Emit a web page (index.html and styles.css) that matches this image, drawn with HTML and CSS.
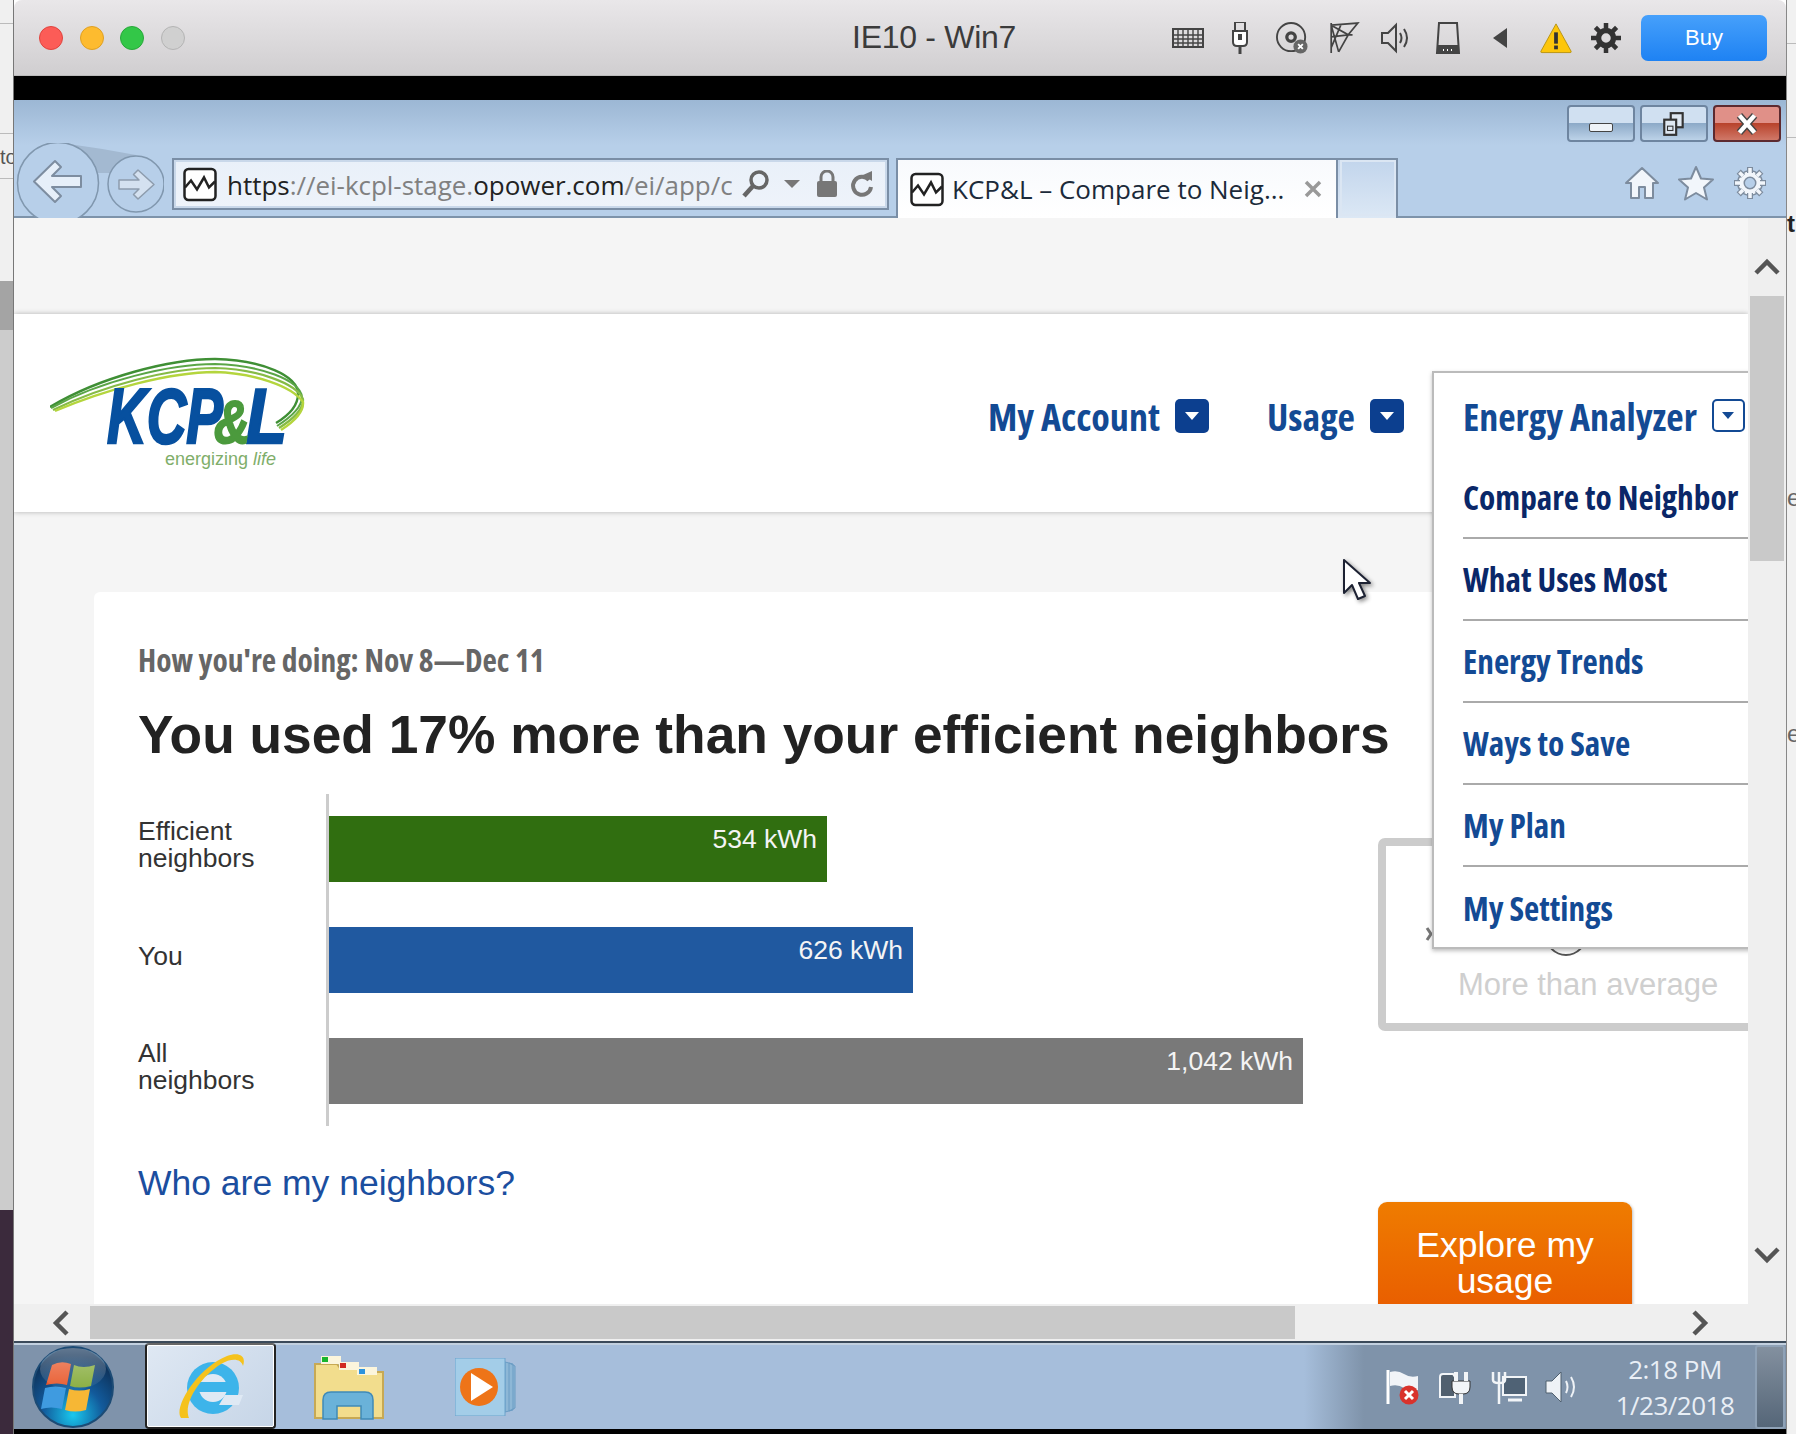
FILE: index.html
```html
<!DOCTYPE html>
<html lang="en">
<head>
<meta charset="utf-8">
<title>IE10 - Win7</title>
<link rel="stylesheet" href="styles.css">
</head>
<body>
<div class="screen">
  <div class="bg-left"><span class="bg-frag">to</span><i class="bg-dark"></i><i class="bg-purple"></i></div>

  <div class="window">
    <header class="titlebar">
      <div class="lights"><i class="light red"></i><i class="light orange"></i><i class="light green"></i><i class="light off"></i></div>
      <div class="vm-title">IE10 - Win7</div>
      <div class="vm-tools">
        <span class="tool"><svg class="ic" viewBox="0 0 32 20"><rect x="1" y="1" width="30" height="18" fill="none" stroke="#444" stroke-width="2"/><path d="M1 7h30M1 11h30M1 15h30M6 1v18M11 1v18M16 1v18M21 1v18M26 1v18" stroke="#444" stroke-width="1.4"/></svg></span>
        <span class="tool"><svg class="ic" viewBox="0 0 32 32"><rect x="11" y="0" width="10" height="9" fill="none" stroke="#444" stroke-width="2"/><path d="M9 9h14v11q0 4-4 4h-6q-4 0-4-4z" fill="#fff" stroke="#444" stroke-width="2"/><path d="M16 24v8" stroke="#444" stroke-width="3"/><path d="M14 12h4v6h-4z" fill="#444"/></svg></span>
        <span class="tool"><svg class="ic" viewBox="0 0 34 34"><circle cx="16" cy="16" r="15" fill="none" stroke="#444" stroke-width="2"/><circle cx="16" cy="16" r="4.5" fill="none" stroke="#444" stroke-width="3.5"/><circle cx="26" cy="26" r="7.5" fill="#666"/><path d="M23.5 23.500l5 5M28.500 23.500l-5 5" stroke="#fff" stroke-width="2"/></svg></span>
        <span class="tool"><svg class="ic" viewBox="0 0 30 30"><path d="M3 1v28M3 3l25-2-9 11-9 16M3 3l16 9 4 0M3 14l16-2M3 3l7 25M12 3l-9 21" fill="none" stroke="#444" stroke-width="1.6"/></svg></span>
        <span class="tool"><svg class="ic" viewBox="0 0 32 30"><path d="M2 10h6l8-8v26l-8-8H2z" fill="none" stroke="#444" stroke-width="2"/><path d="M20 10q3 5 0 10M24 6q6 9 0 18" fill="none" stroke="#444" stroke-width="2"/></svg></span>
        <span class="tool"><svg class="ic" viewBox="0 0 26 32"><path d="M4 1h18l2 30H2z" fill="none" stroke="#444" stroke-width="2"/><rect x="2" y="23" width="22" height="8" fill="#444"/><path d="M8 28h1M12 28h1M16 28h1" stroke="#fff" stroke-width="2"/></svg></span>
        <span class="tool"><svg class="ic-sm" viewBox="0 0 16 20"><path d="M15 0v20L1 10z" fill="#444"/></svg></span>
        <span class="tool tool-shift"><svg class="ic" viewBox="0 0 34 32"><path d="M17 1L33 30q.5 1.500-1 1.500H2q-1.500 0-1-1.500z" fill="#fdc60b" stroke="#b8920f" stroke-width="1"/><rect x="15" y="10" width="4" height="12" fill="#333"/><rect x="15" y="24" width="4" height="4" fill="#333"/></svg></span>
        <span class="tool tool-back"><svg class="ic" viewBox="0 0 32 32"><circle cx="16" cy="16" r="7.500" fill="none" stroke="#333" stroke-width="5.500"/><path d="M16 1v6M16 25v6M1 16h6M25 16h6M5.400 5.400l4.200 4.200M22.400 22.400l4.200 4.200M26.600 5.400l-4.200 4.200M9.600 22.400l-4.200 4.200" stroke="#333" stroke-width="4.500"/></svg></span>
        <button class="buy" type="button">Buy</button>
      </div>
    </header>
    <div class="blackbar"></div>

    <section class="chrome">
      <div class="winctl">
        <span class="wbtn"><i class="wmin"></i></span>
        <span class="wbtn"><svg class="wico" viewBox="0 0 24 24"><rect x="9" y="2" width="11" height="13" fill="#dfe8f2" stroke="#333" stroke-width="2"/><rect x="3" y="8" width="11" height="14" fill="#dfe8f2" stroke="#333" stroke-width="2"/><rect x="6" y="14" width="5" height="4" fill="none" stroke="#333"/></svg></span>
        <span class="wbtn wclose"><svg class="wico" viewBox="0 0 24 24"><path d="M5 4l14 16M19 4L5 20" stroke="#444" stroke-width="6.500"/><path d="M5 4l14 16M19 4L5 20" stroke="#fff" stroke-width="4"/></svg></span>
      </div>
      <div class="navrow">
        <svg class="backfwd" viewBox="0 0 150 75">
          <path d="M48 0Q85 5 122 12L110 30L80 30z" fill="#a3b9d1"/>
          <circle cx="44" cy="40" r="40.500" fill="#b7cfe9" stroke="#8097ae" stroke-width="1.500"/>
          <circle cx="122" cy="41" r="28" fill="#b7cfe9" stroke="#8097ae" stroke-width="1.500"/>
          <path d="M41 18L20 38.500L41 59L47 53L38 44H67V33H38L47 24z" fill="#e6eff9" stroke="#7d8da0" stroke-width="2" stroke-linejoin="round"/>
          <path d="M124 27L140 41.500L124 56L119.500 51.500L125 46H105V37H125L119.500 31.500z" fill="#d4e1f0" stroke="#8d9cad" stroke-width="1.500" stroke-linejoin="round"/>
        </svg>
        <div class="address">
          <svg class="favicon" viewBox="0 0 34 34"><rect x="1.500" y="1.500" width="31" height="31" rx="4" fill="#fff" stroke="#222" stroke-width="2.500"/><path d="M2 20l6-7 6 9 7-12 5 10 6-6" fill="none" stroke="#222" stroke-width="2.500"/></svg>
          <div class="url"><span class="d">https</span>://ei-kcpl-stage.<span class="d">opower.com</span>/ei/app/c</div>
          <svg class="addr-ico search" viewBox="0 0 30 30"><circle cx="18" cy="11" r="8" fill="none" stroke="#666" stroke-width="3.500"/><path d="M12 17L3 27" stroke="#666" stroke-width="4.500"/></svg>
          <svg class="addr-ico caret" viewBox="0 0 16 8"><path d="M0 0h16L8 8z" fill="#777"/></svg>
          <svg class="addr-ico lock" viewBox="0 0 22 28"><path d="M5 12V7a6 6 0 0 1 12 0v5" fill="none" stroke="#777" stroke-width="3"/><rect x="1" y="11" width="20" height="16" rx="2" fill="#777"/></svg>
          <svg class="addr-ico refresh" viewBox="0 0 24 28"><path d="M19 10A9 9 0 1 0 21 17" fill="none" stroke="#777" stroke-width="4"/><path d="M13 5l9-4v10z" fill="#777"/></svg>
        </div>
        <div class="tab">
          <svg class="favicon" viewBox="0 0 34 34"><rect x="1.500" y="1.500" width="31" height="31" rx="4" fill="#fff" stroke="#222" stroke-width="2.500"/><path d="M2 20l6-7 6 9 7-12 5 10 6-6" fill="none" stroke="#222" stroke-width="2.500"/></svg>
          <span class="tab-title">KCP&amp;L – Compare to Neig...</span>
          <svg class="tab-x" viewBox="0 0 18 18"><path d="M2 2l14 14M16 2L2 16" stroke="#999" stroke-width="3.500"/></svg>
        </div>
        <div class="newtab"></div>
        <div class="ie-tools">
          <svg class="ie-ic" viewBox="0 0 36 34"><path d="M18 2L2 17h5v15h8V21h6v11h8V17h5z" fill="#f2f6fb" stroke="#7d8c9e" stroke-width="2" stroke-linejoin="round"/></svg>
          <svg class="ie-ic" viewBox="0 0 36 34"><path d="M18 1l5 11.500 12 1-9 8 3 12-11-6.500-11 6.500 3-12-9-8 12-1z" fill="#f2f6fb" stroke="#7d8c9e" stroke-width="2" stroke-linejoin="round"/></svg>
          <svg class="ie-ic" viewBox="0 0 36 36"><circle cx="18" cy="18" r="9" fill="none" stroke="#7d8c9e" stroke-width="8"/><circle cx="18" cy="18" r="9" fill="none" stroke="#f2f6fb" stroke-width="5"/><path d="M18 2v6M18 28v6M2 18h6M28 18h6M6.700 6.700l4.300 4.300M25 25l4.300 4.300M29.300 6.700L25 11M11 25l-4.300 4.300" stroke="#7d8c9e" stroke-width="6"/><path d="M18 3v5M18 28v5M3 18h5M28 18h5M7.400 7.400l3.600 3.600M25 25l3.600 3.600M28.600 7.400L25 11M11 25l-3.600 3.600" stroke="#f2f6fb" stroke-width="3.500"/></svg>
        </div>
      </div>
    </section>

    <div class="viewport">
      <main class="page">
        <div class="page-top"></div>
        <div class="site-header">
          <svg class="logo" viewBox="0 0 260 120">
            <g fill="none">
              <path d="M0 52C50 22 120 4 165 4C213 5 248 21 248 39C248 52 236 62 226 68" stroke="#3f8f35" stroke-width="2.400"/>
              <path d="M1 53C50 26 120 9 165 9C210 10 250 25 252 42C252 54 238 64 227 71" stroke="#5aa546" stroke-width="2"/>
              <path d="M3 55C52 31 120 13 165 13C206 14 246 28 253 44C254 56 240 66 229 73" stroke="#86bb46" stroke-width="2.200"/>
              <path d="M5 56C54 35 120 17 165 17C203 18 242 31 253 47C254 58 242 68 231 75" stroke="#b4d53d" stroke-width="2.400"/>
            </g>
            <text class="logo-main" x="57" y="88" textLength="116" lengthAdjust="spacingAndGlyphs">KCP</text>
            <text class="logo-main" x="196" y="88" textLength="41" lengthAdjust="spacingAndGlyphs">L</text>
            <text class="logo-amp" x="164" y="88" textLength="36" lengthAdjust="spacingAndGlyphs">&amp;</text>
            <text class="logo-sub" x="115" y="110">energizing <tspan class="logo-life">life</tspan></text>
          </svg>
          <nav class="nav">
            <a class="nav-item">My Account <i class="drop"></i></a>
            <a class="nav-item">Usage <i class="drop"></i></a>
          </nav>
        </div>

        <article class="card">
          <div class="card-main">
            <p class="period">How you're doing: Nov 8—Dec 11</p>
            <h1 class="headline">You used 17% more than your efficient neighbors</h1>
            <div class="chart">
              <div class="labels">
                <div class="lab">Efficient<br>neighbors</div>
                <div class="lab">You</div>
                <div class="lab">All<br>neighbors</div>
              </div>
              <div class="bars">
                <div class="bar bar-green" style="width:498px">534 kWh</div>
                <div class="bar bar-blue" style="width:584px">626 kWh</div>
                <div class="bar bar-gray" style="width:974px">1,042 kWh</div>
              </div>
            </div>
            <a class="who">Who are my neighbors?</a>
          </div>
          <aside class="card-side">
            <div class="compare-box">
              <svg class="gauge" viewBox="0 0 200 50"><path d="M8 18l4 6-4 6" fill="none" stroke="#777" stroke-width="3"/><circle cx="147" cy="25" r="20" fill="none" stroke="#555" stroke-width="2"/></svg>
              <span class="box-text">More than average</span>
            </div>
            <a class="explore">Explore my<br>usage</a>
          </aside>
        </article>

        <div class="menu">
          <div class="menu-row first"><a class="m-blue">Energy Analyzer</a><i class="drop-o"></i></div>
          <div class="menu-row"><a class="m-navy">Compare to Neighbor</a></div>
          <div class="menu-row"><a class="m-navy">What Uses Most</a></div>
          <div class="menu-row"><a class="m-blue">Energy Trends</a></div>
          <div class="menu-row"><a class="m-blue">Ways to Save</a></div>
          <div class="menu-row"><a class="m-blue">My Plan</a></div>
          <div class="menu-row last"><a class="m-blue">My Settings</a></div>
        </div>

        <svg class="cursor" viewBox="0 0 30 44"><path d="M2 2V35L10 27L16 41L23 38L17 25H28z" fill="#fff" stroke="#1d2233" stroke-width="2" stroke-linejoin="round"/></svg>
      </main>
      <div class="vscroll">
        <svg class="chev-v" viewBox="0 0 26 18"><path d="M2 15L13 4L24 15" fill="none" stroke="#555" stroke-width="4.500"/></svg>
        <div class="vthumb"></div>
        <svg class="chev-v chev-end" viewBox="0 0 26 18"><path d="M2 3L13 14L24 3" fill="none" stroke="#555" stroke-width="4.500"/></svg>
      </div>
    </div>

    <div class="hscroll">
      <svg class="chev-h" viewBox="0 0 18 26"><path d="M15 2L4 13L15 24" fill="none" stroke="#555" stroke-width="4.500"/></svg>
      <div class="hthumb"></div>
      <svg class="chev-h chev-end-h" viewBox="0 0 18 26"><path d="M3 2L14 13L3 24" fill="none" stroke="#555" stroke-width="4.500"/></svg>
    </div>

    <footer class="taskbar">
      <svg class="orb" viewBox="0 0 84 84">
        <defs>
          <radialGradient id="orbg" cx="50%" cy="85%" r="75%"><stop offset="0" stop-color="#19c8ee"/><stop offset=".5" stop-color="#125a9b"/><stop offset="1" stop-color="#0d2f55"/></radialGradient>
          <linearGradient id="orbgloss" x1="0" y1="0" x2="0" y2="1"><stop offset="0" stop-color="#fff" stop-opacity=".35"/><stop offset="1" stop-color="#fff" stop-opacity=".03"/></linearGradient>
        </defs>
        <circle cx="42" cy="42" r="40" fill="url(#orbg)" stroke="#1c4b75" stroke-width="2"/>
        <path d="M21 20q9-5 19-1l-4 21q-10-3-21 0z" fill="#e8592c"/>
        <path d="M43 20q9 4 21 0l-4 21q-12 3-21 0z" fill="#86ac3c"/>
        <path d="M14 43q10-3 21 0l-4 21q-11-3-21 0z" fill="#3f9be0"/>
        <path d="M38 44q10 3 21 0l-4 21q-11 3-21 0z" fill="#f6b735"/>
        <ellipse cx="42" cy="24" rx="33" ry="21" fill="url(#orbgloss)"/>
      </svg>
      <div class="tb-active">
        <svg class="ie-logo" viewBox="0 0 72 76">
          <circle cx="38" cy="40" r="26" fill="#3db4ea"/>
          <circle cx="38" cy="40" r="14" fill="#dfe9f4"/>
          <rect x="22" y="34" width="34" height="10" fill="#3db4ea"/>
          <path d="M50 47h18l-4 10H44z" fill="#dfe9f4"/>
          <path d="M6 70C-2 60 22 20 52 8C62 4 72 6 68 18C66 10 56 10 46 16C24 30 8 56 14 70z" fill="#f5c21c"/>
        </svg>
      </div>
      <svg class="folder" viewBox="0 0 72 66">
        <path d="M2 10h22l3 4h22l3 4h18v46H2z" fill="#f2dd8d" stroke="#c7a954" stroke-width="2"/>
        <rect x="8" y="2" width="20" height="8" fill="#fbf5dc"/><rect x="9" y="3" width="6" height="5" fill="#18b52d"/>
        <rect x="26" y="8" width="20" height="8" fill="#fbf5dc"/><rect x="27" y="9" width="6" height="5" fill="#d02b22"/>
        <rect x="44" y="13" width="20" height="8" fill="#fbf5dc"/><rect x="46" y="15" width="6" height="5" fill="#2e93dc"/>
        <path d="M10 65V46q0-8 8-8h34q8 0 8 8v19H48V52H24v13z" fill="#6ab2d9" stroke="#3f8ab8" stroke-width="1.500"/>
      </svg>
      <svg class="player" viewBox="0 0 62 58">
        <path d="M50 4l8 2v46l-8 2zM54 5l6 3v42l-6 3z" fill="#8db7d6" stroke="#6a9cc4"/>
        <path d="M0 0h50v58H0z" fill="#a3cde8" stroke="#6aa2cb"/>
        <circle cx="24" cy="29" r="19" fill="#ee7418"/>
        <path d="M16 15L38 29L16 43z" fill="#fff"/>
      </svg>
      <div class="tray">
        <svg class="tray-ic" viewBox="0 0 36 36"><path d="M3 1v34" stroke="#fff" stroke-width="3"/><path d="M5 3q8-2 14 2t14 2v14q-8 2-14-2t-14-2z" fill="#f1f4f8"/><circle cx="24" cy="26" r="9.500" fill="#d9322c"/><path d="M20 22l8 8M28 22l-8 8" stroke="#fff" stroke-width="3"/></svg>
        <svg class="tray-ic" viewBox="0 0 36 36"><path d="M2 8q0-3 3-3h10l2 3v20H2z" fill="#51606f" stroke="#f2f5f8" stroke-width="2"/><path d="M14 12h18v6q0 7-7 7h-4q-7 0-7-7z" fill="#f2f5f8" stroke="#333" stroke-width="1"/><path d="M18 3v9M28 3v9" stroke="#f2f5f8" stroke-width="4"/><path d="M23 25v10" stroke="#f2f5f8" stroke-width="4"/></svg>
        <svg class="tray-ic" viewBox="0 0 36 36"><rect x="12" y="8" width="23" height="18" fill="#4f6275" stroke="#f2f5f8" stroke-width="2"/><path d="M8 8v27M2 3v8q0 3 6 3t6-3V3M8 3v6" fill="none" stroke="#f2f5f8" stroke-width="2.500"/><path d="M17 31h14" stroke="#f2f5f8" stroke-width="3"/></svg>
        <svg class="tray-ic" viewBox="0 0 36 36"><path d="M2 12h6l9-9v30l-9-9H2z" fill="#eef2f6" stroke="#50606f"/><path d="M22 12q3 6 0 12M27 8q6 10 0 20" fill="none" stroke="#eef2f6" stroke-width="2"/></svg>
      </div>
      <div class="clock"><div>2:18 PM</div><div>1/23/2018</div></div>
      <div class="showdesk"></div>
    </footer>
    <div class="blackfoot"></div>
  </div>

  <div class="bg-right"><span class="frag-t">t:</span><span class="frag-e1">e</span><span class="frag-e2">e</span></div>
</div>
</body>
</html>
```
FILE: styles.css
```css
* { box-sizing: border-box; }
html, body { margin: 0; padding: 0; }
body { width: 1796px; height: 1434px; overflow: hidden; background: #fff; font-family: "Liberation Sans", Arial, sans-serif; }
.screen { display: grid; grid-template-columns: 14px 1772px 10px; height: 1434px; }

.bg-left { position: relative; overflow: hidden; border-right: 1px solid #777; background: linear-gradient(#f0f0f0 0 23px, #bbb 23px 24px, #f0f0f0 24px 133px, #bbb 133px 134px, #f0f0f0 134px 178px, #bbb 178px 179px, #f0f0f0 179px 281px, #ccc 281px); }
.bg-frag { position: absolute; left: 0; top: 146px; font: 20px "Liberation Sans", sans-serif; color: #555; }
.bg-dark { position: absolute; left: 0; right: 0; top: 281px; height: 49px; background: #a4a4a4; }
.bg-purple { position: absolute; left: 0; right: 0; top: 1210px; bottom: 0; background: #3b2a3c; }
.bg-right { position: relative; background: linear-gradient(#f1f1f1 0 43px, #bbb 43px 44px, #f1f1f1 44px 137px, #bbb 137px 138px, #f1f1f1 138px); border-left: 1px solid #888; overflow: hidden; font: 24px "Liberation Sans", sans-serif; color: #666; }
.bg-right span { position: absolute; left: 0; }
.frag-t { top: 210px; color: #222; font-weight: bold; }
.frag-e1 { top: 484px; }
.frag-e2 { top: 720px; }

.window { display: flex; flex-direction: column; height: 1434px; overflow: hidden; }

.titlebar { height: 76px; flex: none; display: flex; align-items: center; background: linear-gradient(#e9e7e9, #d0ced0); border-radius: 8px 8px 0 0; border-bottom: 1px solid #bbb; }
.lights { display: flex; gap: 16.500px; padding-left: 25px; width: 820px; }
.light { width: 24px; height: 24px; border-radius: 50%; }
.red { background: #fc5c57; border: 1px solid #e0443e; }
.orange { background: #fdbb2f; border: 1px solid #dfa023; }
.green { background: #33c748; border: 1px solid #28a83a; }
.off { background: #d0d0d0; border: 1px solid #b4b4b4; }
.vm-title { width: 200px; text-align: center; font-size: 32px; line-height: 36px; margin-top: -2px; letter-spacing: -.3px; color: #3b3b3b; }
.vm-tools { display: flex; align-items: center; margin-left: 128px; }
.tool { width: 52px; display: flex; justify-content: center; }
.tool-shift { margin-left: 4px; }
.tool-back { margin-left: -2px; }
.ic { width: 32px; height: 32px; }
.ic-sm { width: 16px; height: 20px; }
.buy { width: 126px; height: 46px; margin-left: 9px; border: 0; border-radius: 7px; background: linear-gradient(#46a0fb, #1e82f3); color: #fff; font: 22px "Liberation Sans", sans-serif; }

.blackbar { height: 24px; flex: none; background: #000; }

.chrome { height: 118px; flex: none; background: linear-gradient(#9cb7d4, #b7cfe9 45px); border-bottom: 2px solid #7d93aa; }
.winctl { height: 43px; display: flex; justify-content: flex-end; gap: 5px; padding: 5px 5px 0 0; }
.wbtn { width: 68px; height: 37px; display: flex; align-items: center; justify-content: center; border: 2px solid #6e85a0; border-radius: 4px; background: linear-gradient(#d0e0f1 0 50%, #8daac8 50%, #bcd2e8); }
.wclose { border-color: #5c2a30; background: linear-gradient(#e09088 0 50%, #b8432c 50%, #d07868); }
.wmin { width: 24px; height: 9px; background: #eef3f8; border: 1px solid #444; border-radius: 2px; margin-top: 8px; }
.wico { width: 26px; height: 26px; }
.navrow { height: 73px; display: flex; align-items: flex-start; position: relative; }
.backfwd { width: 150px; height: 75px; flex: none; }
.address { width: 717px; height: 52px; margin: 15px 0 0 8px; flex: none; display: flex; align-items: center; padding-left: 9px; background: linear-gradient(#e9f0f9, #eef3fa); border: 2px solid #7a8ea6; outline: 2px solid #c9d8ea; outline-offset: -4px; }
.favicon { width: 34px; height: 35px; flex: none; }
.url { width: 505px; margin-left: 10px; padding-top: 2px; flex: none; overflow: hidden; white-space: nowrap; font: 26px "Open Sans", sans-serif; letter-spacing: -.03px; color: #808080; }
.url .d { color: #222; }
.addr-ico { flex: none; }
.search { width: 30px; height: 30px; margin-left: 9px; }
.caret { width: 16px; height: 8px; margin-left: 13px; }
.lock { width: 22px; height: 28px; margin-left: 16px; }
.refresh { width: 24px; height: 28px; margin-left: 12px; }
.tab { width: 442px; height: 60px; margin: 15px 0 0 7px; flex: none; display: flex; align-items: center; padding-left: 12px; background: linear-gradient(#f8fafd, #fff); border: 2px solid #7a8ea6; border-bottom: 0; }
.tab-title { width: 336px; margin-left: 8px; white-space: nowrap; overflow: hidden; font: 26px "Open Sans", sans-serif; letter-spacing: 0; color: #1b2a3a; }
.tab-x { width: 18px; height: 18px; margin-left: 16px; }
.newtab { width: 60px; height: 60px; margin-top: 15px; flex: none; background: linear-gradient(#c2d5ec, #dce8f5); border: 2px solid #7a8ea6; border-left: 0; border-bottom: 0; outline: 2px solid #dbe6f3; outline-offset: -4px; }
.ie-tools { display: flex; gap: 18px; margin: 22px 0 0 226px; }
.ie-ic { width: 36px; height: 36px; flex: none; }

.viewport { height: 1086px; flex: none; display: flex; overflow: hidden; }
.page { width: 1734px; flex: none; position: relative; overflow: hidden; background: #f5f5f5; }
.page-top { height: 96px; }
.site-header { height: 198px; background: #fff; box-shadow: 0 0 5px rgba(0,0,0,.28); display: flex; align-items: flex-start; position: relative; }
.logo { width: 260px; height: 120px; margin: 41px 0 0 36px; flex: none; }
.logo-main { font: italic bold 78px "Liberation Sans", sans-serif; fill: #07509f; stroke: #07509f; stroke-width: 2.500px; }
.logo-amp { font: italic bold 62px "Liberation Sans", sans-serif; fill: #4b9a3d; stroke: #4b9a3d; stroke-width: 2px; }
.logo-sub { font: 18px "Liberation Sans", sans-serif; fill: #7fae6a; }
.logo-life { font-style: italic; }
.nav { display: flex; gap: 58px; margin-left: 678px; padding-top: 77px; }
.nav-item, .menu-row a { font-family: "Open Sans", sans-serif; font-stretch: 75%; font-weight: 700; font-size: 38px; line-height: 50px; white-space: nowrap; }
.nav-item { display: flex; align-items: center; gap: 15px; color: #134a94; }
.drop { width: 34px; height: 34px; border-radius: 5px; background: #0c3f8f; position: relative; display: block; }
.drop::after { content: ""; position: absolute; left: 10px; top: 13px; border: 7px solid transparent; border-top: 8px solid #fff; border-bottom: 0; }

.card { margin: 80px 0 0 80px; background: #fff; border-radius: 6px 6px 0 0; display: grid; grid-template-columns: 1284px 400px; height: 800px; }
.card-main { padding: 48px 0 0 44px; min-width: 0; }
.period { margin: 0; font-family: "Open Sans", sans-serif; font-stretch: 75%; font-weight: 700; font-size: 31.400px; line-height: 40px; color: #666; }
.headline { margin: 25px 0 0; font-size: 53.300px; line-height: 60px; font-weight: 700; color: #222; white-space: nowrap; }
.chart { display: flex; height: 332px; margin-top: 29px; font-size: 26.500px; }
.labels { width: 188px; flex: none; padding-top: 22px; display: flex; flex-direction: column; gap: 45px; color: #333; }
.lab { height: 66px; line-height: 27px; display: flex; align-items: center; padding-bottom: 8px; }
.bars { flex: 1; padding-top: 22px; border-left: 3px solid #ccc; display: flex; flex-direction: column; gap: 45px; }
.bar { height: 66px; padding: 8px 10px 0 0; line-height: 30px; color: #f4f4f4; text-align: right; }
.bar-green { background: #306e10; }
.bar-blue { background: #2059a0; }
.bar-gray { background: #797979; }
.who { display: block; margin-top: 35px; font-size: 35.500px; line-height: 44px; color: #1b4e9f; }
.card-side { padding-top: 246px; }
.compare-box { width: 400px; height: 193px; border: 8px solid #ccc; border-radius: 7px; padding: 64px 0 0 72px; display: flex; flex-direction: column; align-items: flex-start; }
.gauge { width: 200px; height: 50px; margin: 0 0 7px -39px; flex: none; }
.box-text { font-size: 31px; line-height: 36px; color: #cfcfcf; }
.explore { display: block; width: 254px; height: 120px; margin-top: 171px; padding-top: 25px; border-radius: 9px 9px 0 0; background: linear-gradient(#ef7c00, #e85a00); color: #fff; font-size: 35.500px; line-height: 36px; text-align: center; box-shadow: 1px 1px 3px rgba(0,0,0,.25); }

.menu { position: absolute; left: 1418px; top: 153px; width: 330px; height: 578px; background: #fff; border: 2px solid #bbb; border-right: 0; box-shadow: 0 2px 4px rgba(0,0,0,.25); padding-left: 29px; }
.menu-row { height: 82px; display: flex; align-items: center; border-bottom: 2px solid #aaa; }
.menu-row.first { height: 84px; padding-top: 1px; border-bottom: 0; gap: 15px; }
.menu-row.last { border-bottom: 0; }
.menu-row a { font-size: 33.300px; }
.menu-row.first a { font-size: 38px; }
.m-blue { color: #134a94; }
.m-navy { color: #0a2768; }
.drop-o { width: 33px; height: 33px; border: 2px solid #134a94; border-radius: 5px; position: relative; display: block; }
.drop-o::after { content: ""; position: absolute; left: 8px; top: 11px; border: 6px solid transparent; border-top: 7px solid #134a94; border-bottom: 0; }
.cursor { position: absolute; left: 1328px; top: 340px; width: 30px; height: 44px; filter: drop-shadow(2px 2px 2px rgba(0,0,0,.45)); }

.vscroll { flex: 1; background: #efefef; padding-left: 2px; display: flex; flex-direction: column; align-items: flex-start; }
.chev-v { width: 26px; height: 18px; margin: 40px 0 0 4px; flex: none; }
.vthumb { width: 34px; height: 265px; margin-top: 20px; background: #c9c9c9; flex: none; }
.chev-end { margin-top: auto; margin-bottom: 40px; }

.hscroll { height: 39px; flex: none; background: #efefef; display: flex; align-items: center; border-bottom: 2px solid #3b4a5a; }
.chev-h { width: 18px; height: 26px; margin-left: 38px; flex: none; }
.hthumb { width: 1205px; height: 33px; margin-left: 20px; background: #c9c9c9; flex: none; }
.chev-end-h { margin-left: 396px; }

.taskbar { height: 86px; flex: none; display: flex; align-items: center; background: linear-gradient(90deg, #7f93ab 0, #7f93ab 130px, #a6bedb 230px, #a6bedb 1290px, #7f93aa 1350px); border-top: 2px solid #c2d0df; }
.orb { width: 84px; height: 84px; margin-left: 17px; flex: none; }
.tb-active { width: 131px; height: 86px; margin: -3px 0 0 30px; flex: none; display: flex; justify-content: center; align-items: center; background: linear-gradient(135deg, #dfe8f3, #c6d5e7); border: 2px solid #222; border-top-color: #666; border-radius: 4px; outline: 1px solid #fff; outline-offset: -3px; }
.ie-logo { width: 72px; height: 76px; }
.folder { width: 72px; height: 66px; margin-left: 37px; flex: none; }
.player { width: 62px; height: 58px; margin-left: 70px; flex: none; }
.tray { display: flex; gap: 17px; margin-left: 868px; flex: none; }
.tray-ic { width: 36px; height: 36px; }
.clock { width: 150px; margin-left: 20px; flex: none; text-align: center; font: 26px/36px "Open Sans", sans-serif; color: #e9eff6; letter-spacing: -.5px; }
.showdesk { width: 30px; height: 84px; margin-left: 5px; flex: none; border: 2px solid #8fa2b7; border-radius: 3px; background: linear-gradient(#83909f, #556678); }
.blackfoot { flex: 1; background: #000; }
```
